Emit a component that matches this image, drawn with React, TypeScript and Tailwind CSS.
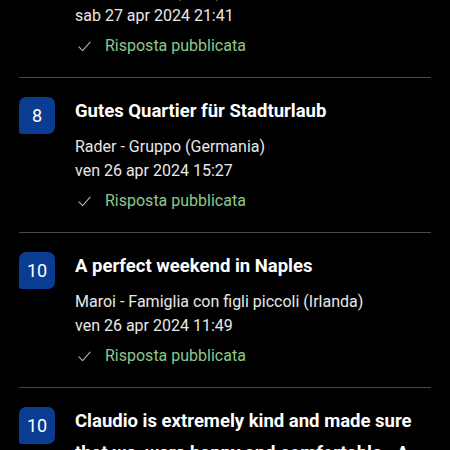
const REVIEWS = [
  {
    score: '9',
    title: 'Ottima posizione',
    author: 'Luca - Coppia (Italia)',
    date: 'sab 27 apr 2024 21:41',
    replied: true,
  },
  {
    score: '8',
    title: 'Gutes Quartier für Stadturlaub',
    author: 'Rader - Gruppo (Germania)',
    date: 'ven 26 apr 2024 15:27',
    replied: true,
  },
  {
    score: '10',
    title: 'A perfect weekend in Naples',
    author: 'Maroi - Famiglia con figli piccoli (Irlanda)',
    date: 'ven 26 apr 2024 11:49',
    replied: true,
  },
  {
    score: '10',
    title: 'Claudio is extremely kind and made sure that we  were happy and comfortable.  A lovely stay',
    author: 'Anna - Coppia (Regno Unito)',
    date: 'gio 25 apr 2024 09:12',
    replied: true,
  },
];

function Check() {
  return (
    <svg width="15" height="15" viewBox="0 0 24 24" fill="none" stroke="#a3bfa6" strokeWidth="1.7" strokeLinecap="round" strokeLinejoin="round">
      <path d="M3 12.5l6 6L21 5" />
    </svg>
  );
}

export default function App() {
  return (
    <div className="h-[450px] w-[450px] overflow-hidden bg-black font-['Roboto',sans-serif] text-white">
      <div className="-mt-[77px]">
        {REVIEWS.map((r, i) => (
          <div key={i}>
            {i > 0 && <div className="mx-[19px] h-px bg-[#4a4a4a]" />}
            <div className="flex gap-[20px] px-[19px] pt-[17px] pb-[19px]">
              <div className="mt-[2px] flex h-[37px] w-[36px] shrink-0 items-center justify-center rounded-[7px] rounded-bl-[2px] bg-[#0a3d92] text-[18px] text-white">
                {r.score}
              </div>
              <div className="flex min-w-0 flex-col">
                <div className="whitespace-pre-wrap text-[18.5px] font-bold leading-[32px] text-white">{r.title}</div>
                <div className="mt-[8px] text-[16px] leading-[24px] text-[#e8e8e8]">{r.author}</div>
                <div className="text-[16px] leading-[24px] text-[#e8e8e8]">{r.date}</div>
                {r.replied && (
                  <div className="mt-[6px] flex items-center gap-[13px] text-[16px] leading-[24px] text-[#8cc98f]">
                    <span className="ml-[2px] flex"><Check /></span>
                    Risposta pubblicata
                  </div>
                )}
              </div>
            </div>
          </div>
        ))}
      </div>
    </div>
  );
}
